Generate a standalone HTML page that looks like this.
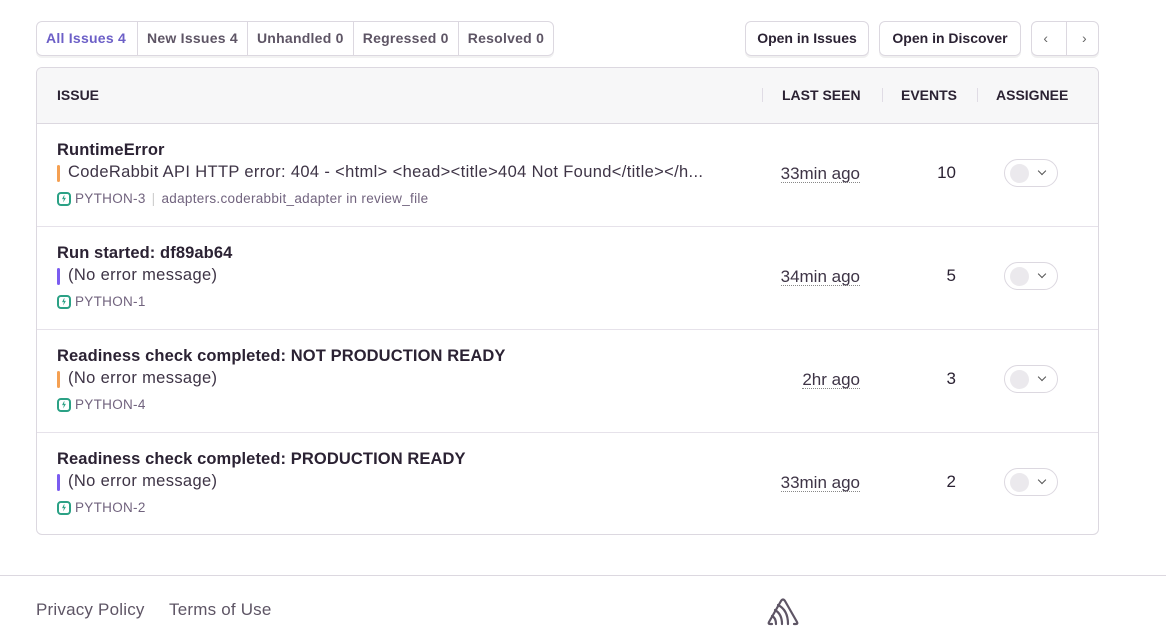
<!DOCTYPE html>
<html><head><style>
*{box-sizing:border-box;margin:0;padding:0}
body{width:1166px;height:631px;background:#fff;font-family:"Liberation Sans",sans-serif;color:#2b2233;position:relative;overflow:hidden}
.tabs{position:absolute;left:36px;top:21px;height:35px;display:flex;border:1px solid #dcd8e0;border-radius:6px;box-shadow:0 2px 0 rgba(0,0,0,.05);overflow:hidden}
.tabs div{padding:0 9px;line-height:33px;font-size:14px;font-weight:bold;color:#5e5565;border-left:1px solid #dcd8e0;letter-spacing:.25px}
.tabs div:first-child{border-left:none;color:#6c5fc7;width:100px}
.btn{position:absolute;top:21px;height:35px;border:1px solid #dcd8e0;border-radius:6px;box-shadow:0 2px 0 rgba(0,0,0,.06);font-size:14px;font-weight:bold;line-height:33px;text-align:center;color:#2b2233}
.table{position:absolute;left:36px;top:67px;width:1063px;height:468px;border:1px solid #dcd8e0;border-radius:6px;overflow:hidden}
.hd{height:56px;background:#f7f7f8;border-bottom:1px solid #dcd8e0;position:relative;font-size:14px;font-weight:bold;color:#2b2233}
.hd span{position:absolute;top:19px}
.sep{position:absolute;top:20px;width:1px;height:14px;background:#e0dce5}
.row{height:103px;border-bottom:1px solid #e6e2ea;position:relative}
.row:last-child{border-bottom:none}
.t{position:absolute;left:20px;top:17px;font-size:16.5px;font-weight:bold;letter-spacing:.1px}
.m{position:absolute;left:20px;top:39px;font-size:16.5px;color:#3e3446;padding-left:11px;white-space:nowrap;letter-spacing:.35px}
.m:before{content:"";position:absolute;left:0;top:2px;width:3px;height:17px;border-radius:2px;background:var(--c)}
.s{position:absolute;left:20px;top:67px;font-size:13.5px;color:#71637e;display:flex;align-items:center;letter-spacing:.3px}
.ic{width:14px;height:14px;border:2px solid #2ba185;border-radius:4px;margin-right:4px;position:relative}
.ic:after{content:"";position:absolute;left:3px;top:1px;width:4px;height:8px;background:#2ba185;clip-path:polygon(60% 0,0 60%,45% 55%,30% 100%,100% 40%,55% 45%)}
.ls{position:absolute;right:238px;top:41px;font-size:17px;color:#3e3446;border-bottom:1px dotted #888;line-height:17px}
.ev{position:absolute;right:142px;top:39px;font-size:17px;color:#2b2233}
.as{position:absolute;left:967px;top:35px;width:54px;height:28px;border:1px solid #dcd8e0;border-radius:14px}
.as:before{content:"";position:absolute;left:5px;top:4px;width:19px;height:19px;border-radius:50%;background:#ebe9ed}
.as:after{content:"";position:absolute;left:34px;top:8px;width:5px;height:5px;border-right:1.5px solid #555;border-bottom:1.5px solid #555;transform:rotate(45deg)}
.foot{position:absolute;top:575px;left:0;width:1166px;border-top:1px solid #dcd8e0}
.fl{position:absolute;top:600px;font-size:17px;color:#5e5565;letter-spacing:.2px}
</style></head><body>
<div class="tabs"><div>All Issues 4</div><div>New Issues 4</div><div>Unhandled 0</div><div>Regressed 0</div><div>Resolved 0</div></div>
<div class="btn" style="left:745px;width:124px">Open in Issues</div>
<div class="btn" style="left:879px;width:142px">Open in Discover</div>
<div class="btn" style="left:1031px;width:68px;font-weight:normal;color:#666">‹<span style="display:inline-block;width:1px;height:33px;background:#dcd8e0;vertical-align:top;margin:0 15px 0 18px"></span>›</div>
<div class="table">
<div class="hd"><span style="left:20px">ISSUE</span><div class="sep" style="left:725px"></div><span style="left:745px">LAST SEEN</span><div class="sep" style="left:845px"></div><span style="left:864px">EVENTS</span><div class="sep" style="left:940px"></div><span style="left:959px">ASSIGNEE</span></div>
<div class="row"><div class="t">RuntimeError</div><div class="m" style="--c:#f5a052">CodeRabbit API HTTP error: 404 - &lt;html&gt; &lt;head&gt;&lt;title&gt;404 Not Found&lt;/title&gt;&lt;/h...</div><div class="s"><div class="ic"></div>PYTHON-3<span style="color:#ccc;margin:0 6px">|</span>adapters.coderabbit_adapter in review_file</div><div class="ls">33min ago</div><div class="ev">10</div><div class="as"></div></div>
<div class="row"><div class="t">Run started: df89ab64</div><div class="m" style="--c:#7b5cf0">(No error message)</div><div class="s"><div class="ic"></div>PYTHON-1</div><div class="ls">34min ago</div><div class="ev">5</div><div class="as"></div></div>
<div class="row"><div class="t">Readiness check completed: NOT PRODUCTION READY</div><div class="m" style="--c:#f5a052">(No error message)</div><div class="s"><div class="ic"></div>PYTHON-4</div><div class="ls">2hr ago</div><div class="ev">3</div><div class="as"></div></div>
<div class="row"><div class="t">Readiness check completed: PRODUCTION READY</div><div class="m" style="--c:#7b5cf0">(No error message)</div><div class="s"><div class="ic"></div>PYTHON-2</div><div class="ls">33min ago</div><div class="ev">2</div><div class="as"></div></div>
</div>
<div class="foot"></div>
<div class="fl" style="left:36px">Privacy Policy</div>
<div class="fl" style="left:169px">Terms of Use</div>
<svg style="position:absolute;left:767px;top:597px" width="32" height="30" viewBox="0 0 32 30" fill="none" stroke="#5e5565" stroke-width="2.2" stroke-linejoin="round" stroke-linecap="round"><path d="M5 27H3Q1 27 2 25L14 4Q16 1 18 4L30 25Q31 27 29 27H27"/><path d="M9 27Q9 21 5 19"/><path d="M15 27Q15 17 8 13"/><path d="M21 27Q21 13 11 8"/></svg>
</body></html>
